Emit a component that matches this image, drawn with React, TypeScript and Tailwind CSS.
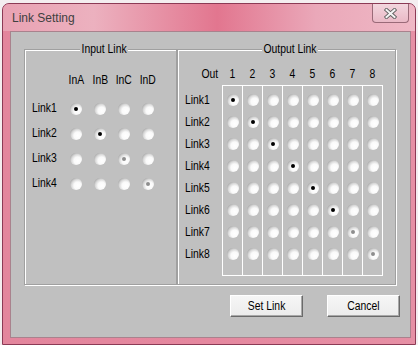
import React from 'react';

// 0 = empty, 1 = checked, 2 = checked but greyed
type RadioState = 0 | 1 | 2;

const inputCols = ['InA', 'InB', 'InC', 'InD'];
const inputRows: { name: string; sel: number; dim?: boolean }[] = [
  { name: 'Link1', sel: 0 },
  { name: 'Link2', sel: 1 },
  { name: 'Link3', sel: 2, dim: true },
  { name: 'Link4', sel: 3, dim: true }
];

const outRows = [
  { name: 'Link1', sel: 0 },
  { name: 'Link2', sel: 1 },
  { name: 'Link3', sel: 2 },
  { name: 'Link4', sel: 3 },
  { name: 'Link5', sel: 4 },
  { name: 'Link6', sel: 5 },
  { name: 'Link7', sel: 6, dim: true },
  { name: 'Link8', sel: 7, dim: true }
];

// no narrow face installed, so squeeze Liberation Sans horizontally
const Narrow: React.FC<{ children: React.ReactNode; className?: string }> = ({ children, className = 'origin-center' }) => (
  <span className={`inline-block scale-x-[0.83] ${className}`}>{children}</span>
);

const Radio: React.FC<{ state: RadioState }> = ({ state }) => (
  <span className="w-[12px] h-[12px] rounded-full flex items-center justify-center bg-[radial-gradient(circle_at_64%_64%,#ffffff_0%,#fafafa_34%,#d8d8d8_58%,#939393_88%)]">
    {state === 1 && <span className="w-[4px] h-[4px] rounded-full bg-black" />}
    {state === 2 && <span className="w-[4px] h-[4px] rounded-full bg-[#8e8e8e]" />}
  </span>
);

const GroupBox: React.FC<{ title: string; titleFix: string; className: string; children: React.ReactNode }> = ({
  title,
  titleFix,
  className,
  children
}) => (
  <fieldset
    className={`border border-[#a0a0a0] shadow-[1px_1px_0_#ffffff,inset_1px_1px_0_#ffffff] ${className}`}
  >
    <legend className="mx-auto px-[2px] bg-[#c0c0c0] text-[12.5px] leading-[13px] text-black">
      <Narrow className={`origin-center ${titleFix}`}>{title}</Narrow>
    </legend>
    {children}
  </fieldset>
);

const WinButton: React.FC<{ label: string }> = ({ label }) => (
  <button className="w-[73px] h-[22px] bg-[linear-gradient(#f6f6f6,#ececec)] border border-t-white border-l-white border-r-[#6a6a6a] border-b-[#6a6a6a] shadow-[inset_-1px_-1px_0_#a8a8a8] text-[12.5px] text-black">
    <Narrow>{label}</Narrow>
  </button>
);

export default function App() {
  return (
    <div className="w-[418px] h-[345px] bg-[#f4eef0] overflow-hidden">
      <div className="ml-[2px] mt-[3px] w-[414px] h-[342px] rounded-t-[7px] border border-[#8c3a55] bg-[linear-gradient(90deg,#e3869d,#e5889f_50%,#e690a5)] flex flex-col">
        {/* title bar */}
        <div className="h-[27px] flex items-start justify-between rounded-t-[6px] bg-[linear-gradient(90deg,#e9a2b3_0%,#ecb1bf_22%,#e2768f_52%,#eaa8b9_76%,#efb8c5_100%)]">
          <span className="self-center mt-[1px] pl-[9px] font-['Liberation_Sans',sans-serif] text-[12px] text-[#404040]">
            Link Setting
          </span>
          <div className="mr-[6px] w-[37px] h-[19px] rounded-b-[4px] border border-t-0 border-[#9a6a78] bg-[linear-gradient(#f3d6de,#eab9c6)] flex items-center justify-center">
            <svg width="13" height="11" viewBox="0 0 13 11">
              <path d="M2.5 2 L10.5 9 M10.5 2 L2.5 9" stroke="#5f5f5f" strokeWidth="3.8" strokeLinecap="square" />
              <path d="M2.5 2 L10.5 9 M10.5 2 L2.5 9" stroke="#f4f4f4" strokeWidth="2" strokeLinecap="square" />
            </svg>
          </div>
        </div>

        {/* client area */}
        <div className="ml-[7px] mr-[4px] mb-[6px] flex-1 border border-[#a9828d] bg-[#c0c0c0] flex flex-col font-['Liberation_Sans',sans-serif]">
          <div className="flex pl-[13px] mt-[11px]">
            <GroupBox title="Input Link" titleFix="-mx-[5px]" className="w-[153px] h-[242px] pl-[7px]">
              <div className="grid grid-cols-[32px_24px_24px_24px_24px] grid-rows-[25px] mt-[12px] text-[12.5px] text-black">
                <span />
                {inputCols.map((c) => (
                  <span key={c} className="flex items-center justify-center">
                    <Narrow>{c}</Narrow>
                  </span>
                ))}
              </div>
              <div className="mt-[3px] grid grid-cols-[32px_24px_24px_24px_24px] auto-rows-[25px] text-[12.5px] text-black">
                {inputRows.map((r) => (
                  <React.Fragment key={r.name}>
                    <span className="flex items-center">
                      <Narrow className="origin-left">{r.name}</Narrow>
                    </span>
                    {inputCols.map((c, i) => (
                      <span key={c} className="flex items-center justify-center">
                        <Radio state={i === r.sel ? (r.dim ? 2 : 1) : 0} />
                      </span>
                    ))}
                  </React.Fragment>
                ))}
              </div>
            </GroupBox>

            <GroupBox title="Output Link" titleFix="-mx-[6px]" className="w-[219px] h-[242px] pl-[7px]">
              <div className="flex h-[22px] mt-[7px] text-[12.5px] text-black">
                <span className="w-[37px] pr-[4px] flex items-center justify-end">
                  <Narrow className="origin-right">Out</Narrow>
                </span>
                {outRows.map((_, i) => (
                  <span key={i} className="w-[20px] border-l border-transparent flex items-center justify-center">
                    <Narrow>{i + 1}</Narrow>
                  </span>
                ))}
              </div>
              <div className="flex text-[12.5px] text-black">
                <div className="w-[37px] pt-[4px] flex flex-col">
                  {outRows.map((r) => (
                    <span key={r.name} className="h-[22px] flex items-center">
                      <Narrow className="origin-left">{r.name}</Narrow>
                    </span>
                  ))}
                </div>
                <div className="flex border-y border-r border-white">
                  {outRows.map((_, col) => (
                    <div key={col} className="w-[20px] border-l border-white pt-[3px] pb-[10px] flex flex-col">
                      {outRows.map((r, row) => (
                        <span key={row} className="h-[22px] flex items-center justify-center">
                          <Radio state={r.sel === col ? (r.dim ? 2 : 1) : 0} />
                        </span>
                      ))}
                    </div>
                  ))}
                </div>
              </div>
            </GroupBox>
          </div>

          <div className="flex justify-end gap-[24px] pr-[10px] mt-[10px]">
            <WinButton label="Set Link" />
            <WinButton label="Cancel" />
          </div>
        </div>
      </div>
    </div>
  );
}
